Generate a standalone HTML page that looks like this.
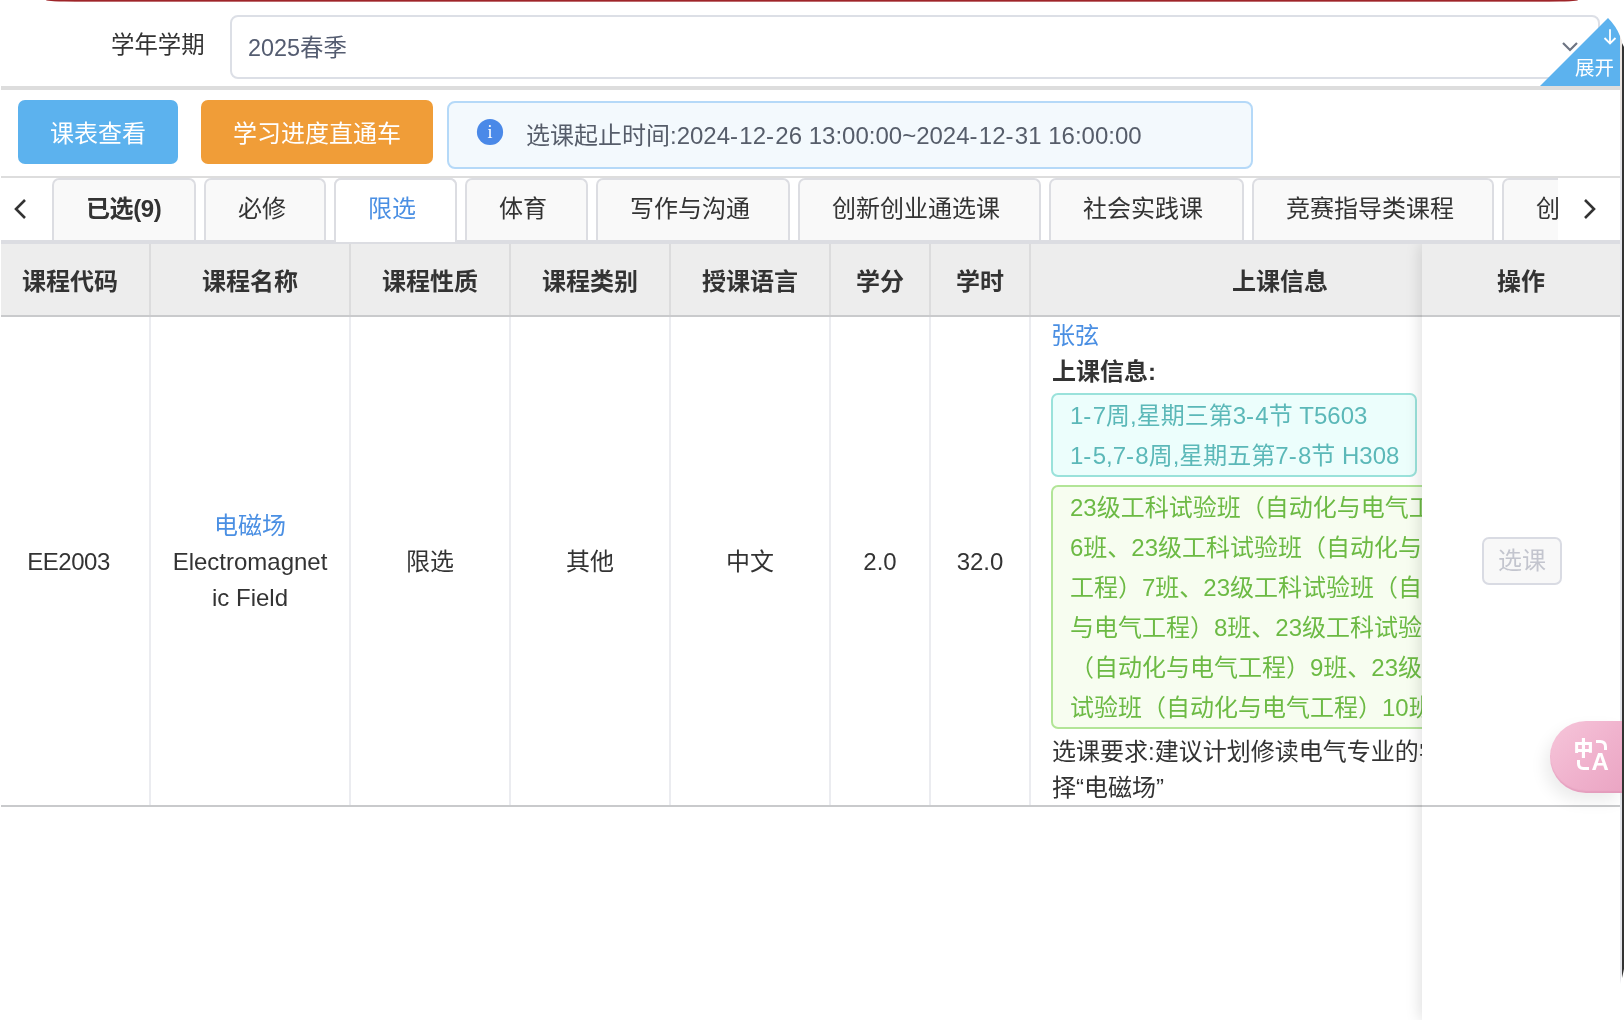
<!DOCTYPE html>
<html lang="zh-CN">
<head>
<meta charset="utf-8">
<title>选课</title>
<style>
*{box-sizing:border-box;margin:0;padding:0}
html,body{width:1624px;height:1020px;overflow:hidden;background:#fff}
body{position:relative;-webkit-font-smoothing:antialiased;font-family:"Liberation Sans","Noto Sans CJK SC",sans-serif;font-size:24px;color:#333;font-weight:400}
.abs{position:absolute}
#wrap{position:absolute;left:0;top:0;width:1624px;height:1020px;overflow:hidden;will-change:transform;transform:translateZ(0)}
/* top strip */
#redline{left:46px;top:0;width:1532px;height:2px;background:linear-gradient(#9c2226 0,#a0282c 50%,#dcaeb0 100%);border-radius:0 0 30px 30px/0 0 2px 2px}
#lbl{left:111px;top:27px;width:96px;height:36px;line-height:36px;font-size:23.4px;color:#333;white-space:nowrap}
#sel{left:230px;top:15px;width:1370px;height:64px;border:2px solid #dcdfe6;border-radius:8px;background:#fff}
#sel span{position:absolute;left:16px;top:13px;line-height:36px;font-size:23.4px;color:#545c70;white-space:nowrap}
#hr1{left:1px;top:86px;width:1619px;height:4px;background:#dddddd}
/* buttons */
.btn{top:100px;height:64px;border-radius:7px;color:#fff;font-size:24px;line-height:67px;text-align:center;white-space:nowrap;letter-spacing:0}
#b1{left:18px;width:160px;background:#5cb2ee}
#b2{left:201px;width:232px;background:#f09d38}
#alert{left:447px;top:101px;width:806px;height:68px;border:2px solid #b5d9f8;border-radius:8px;background:#f3f9fd}
#alert span{position:absolute;left:77px;top:15px;line-height:36px;font-size:24px;color:#565d6a;white-space:nowrap}
/* tabs */
#hr2{left:1px;top:176px;width:1619px;height:2px;background:#dddddd}
#hr3{left:1px;top:240px;width:1619px;height:4px;background:#dcdde2}
.tab{top:178px;height:62px;border:2px solid #dcdde2;border-bottom:none;border-radius:7px 7px 0 0;background:#f9f9f9;font-size:24px;line-height:58px;text-align:left;padding-left:32px;color:#333;white-space:nowrap;overflow:hidden}
.tab.act{background:#fff;color:#4a8fe3;height:64px}
.tab.b{font-weight:700;letter-spacing:-0.4px}
#tabmask{left:1558px;top:178px;width:62px;height:62px;background:#fff}
/* table */
#thead{left:1px;top:244px;width:1619px;height:71px;background:#ededed}
#theadb{left:1px;top:315px;width:1619px;height:2px;background:#c9cacc}
#rowb{left:1px;top:805px;width:1619px;height:2px;background:#c9cacc}
.vl{top:244px;width:2px;height:561px;background:#ebecf0}
.vlh{top:244px;width:2px;height:71px;background:#dcdcdd}
.th{top:244px;height:71px;line-height:76px;text-align:center;font-weight:700;font-size:24px;color:#333;white-space:nowrap}
.td{text-align:center;font-size:24px;line-height:36px;color:#333;white-space:nowrap}
.link{color:#4a8fe3}
#info{left:1051px;top:318px;width:380px;height:490px;font-size:24px;line-height:36px;color:#333;white-space:nowrap}
i{font-style:normal;letter-spacing:1.3px}
#teal{left:0;top:75px;width:366px;height:84px;border:2px solid #9ae2db;border-radius:7px;background:#ecfefc;color:#5bb8b8;padding:1px 0 0 17px;line-height:40px}
#green{left:0;top:167px;width:430px;height:244px;border:2px solid #b2e597;border-radius:7px;background:#f7fdf0;color:#6cba44;padding:1px 0 0 17px;line-height:40px}
#req{left:1px;top:416px;line-height:36px}
/* fixed col */
#fix{left:1422px;top:244px;width:198px;height:776px;background:#fff;box-shadow:-2px 0 14px rgba(0,0,0,.13);clip-path:inset(0 0 0 -40px)}
#fixh{left:0;top:0;width:198px;height:71px;background:#ededed;line-height:76px;text-align:center;font-weight:700}
#fixhb{left:0;top:71px;width:198px;height:2px;background:#c9cacc}
#fixrb{left:0;top:561px;width:198px;height:2px;background:#c9cacc}
#xk{left:60px;top:293px;width:80px;height:48px;border:2px solid #d9dbe3;border-radius:7px;background:#f8f8f8;color:#c3c5ce;font-size:24px;line-height:44px;text-align:center}
/* right edge */
#edge1{left:1620px;top:36px;width:2px;height:948px;background:linear-gradient(#ebe5e1 0,#ebe5e1 50px,#e4e5ea 140px,#e4e5ea 100%);clip-path:polygon(0 0,100% 5px,100% 936px,0 100%)}
#edge2{left:1622px;top:38px;width:2px;height:940px;background:#333;clip-path:polygon(0 5px,100% 9px,100% 931px,0 100%);z-index:6}
#pill{left:1550px;top:721px;width:72px;height:72px;border-radius:36px 0 0 36px;background:linear-gradient(135deg,#f6c6da 0%,#f0b2cd 55%,#eaa5c3 100%);box-shadow:-5px 8px 16px rgba(0,0,0,.08),inset 0 -2px 1px rgba(205,120,160,.25);z-index:5}
</style>
</head>
<body>
<div id="wrap">
<div class="abs" id="redline"></div>
<div class="abs" id="lbl">学年学期</div>
<div class="abs" id="sel"><span>2025春季</span>
<svg class="abs" style="left:1329px;top:24px" width="18" height="12" viewBox="0 0 18 12"><path d="M2 2 L9 9 L16 2" fill="none" stroke="#6d7483" stroke-width="2.2"/></svg>
</div>
<div class="abs" id="hr1"></div>
<svg class="abs" style="left:1536px;top:14px" width="88" height="76" viewBox="0 0 88 76"><path d="M4 72 L72 4 Q80 12 84 22 L84 72 Z" fill="#5cb2ee"/>
<path d="M74 15.300 V29.500 M68.500 24 L74 29.500 L79.500 24" fill="none" stroke="#fff" stroke-width="1.8"/>
<text x="39" y="61" font-size="19.500" fill="#fff" font-family="Liberation Sans,Noto Sans CJK SC,sans-serif">展开</text></svg>

<div class="abs btn" id="b1">课表查看</div>
<div class="abs btn" id="b2">学习进度直通车</div>
<div class="abs" id="alert">
<svg class="abs" style="left:26.500px;top:15px" width="28" height="28" viewBox="0 0 28 28"><circle cx="14" cy="14" r="13.100" fill="#4a89e8"/><text x="14" y="20" text-anchor="middle" font-size="18" font-family="Liberation Serif,serif" fill="#fff">i</text></svg>
<span>选课起止时间:2024<i>-</i>12<i>-</i>26 13:00:00~2024<i>-</i>12<i>-</i>31 16:00:00</span></div>

<div class="abs" id="hr2"></div>
<div class="abs tab b" style="left:52px;width:144px">已选(9)</div>
<div class="abs tab " style="left:204px;width:122px">必修</div>
<div class="abs tab act" style="left:334px;width:123px">限选</div>
<div class="abs tab " style="left:465px;width:123px">体育</div>
<div class="abs tab " style="left:596px;width:194px">写作与沟通</div>
<div class="abs tab " style="left:798px;width:243px">创新创业通选课</div>
<div class="abs tab " style="left:1049px;width:195px">社会实践课</div>
<div class="abs tab " style="left:1252px;width:242px">竞赛指导类课程</div>
<div class="abs tab " style="left:1502px;width:242px">创新实践课程</div>
<div class="abs" id="tabmask"></div>
<div class="abs" id="hr3"></div>
<div class="abs tab act" style="left:334px;width:123px;z-index:3">限选</div>
<svg class="abs" style="left:10px;top:196px" width="20" height="26" viewBox="0 0 20 26"><path d="M15 4 L6 13 L15 22" fill="none" stroke="#333" stroke-width="2.6"/></svg>
<svg class="abs" style="left:1580px;top:196px" width="20" height="26" viewBox="0 0 20 26"><path d="M5 4 L14 13 L5 22" fill="none" stroke="#333" stroke-width="2.6"/></svg>

<!-- table -->
<div class="abs" id="thead"></div>
<div class="abs th" style="left:-10px;width:160px">课程代码</div>
<div class="abs th" style="left:150px;width:200px">课程名称</div>
<div class="abs th" style="left:350px;width:160px">课程性质</div>
<div class="abs th" style="left:510px;width:160px">课程类别</div>
<div class="abs th" style="left:670px;width:160px">授课语言</div>
<div class="abs th" style="left:830px;width:100px">学分</div>
<div class="abs th" style="left:930px;width:100px">学时</div>
<div class="abs th" style="left:1030px;width:500px">上课信息</div>
<div class="abs vl" style="left:149px"></div><div class="abs vl" style="left:349px"></div><div class="abs vl" style="left:509px"></div><div class="abs vl" style="left:669px"></div><div class="abs vl" style="left:829px"></div><div class="abs vl" style="left:929px"></div><div class="abs vl" style="left:1029px"></div>
<div class="abs vlh" style="left:149px"></div><div class="abs vlh" style="left:349px"></div><div class="abs vlh" style="left:509px"></div><div class="abs vlh" style="left:669px"></div><div class="abs vlh" style="left:829px"></div><div class="abs vlh" style="left:929px"></div><div class="abs vlh" style="left:1029px"></div>
<div class="abs" id="theadb"></div>

<div class="abs td" style="left:-11.500px;top:544px;width:160px;letter-spacing:-0.45px">EE2003</div>
<div class="abs td" style="left:150px;top:508px;width:200px"><span class="link">电磁场</span><br>Electromagnet<br>ic Field</div>
<div class="abs td" style="left:350px;top:544px;width:160px">限选</div>
<div class="abs td" style="left:510px;top:544px;width:160px">其他</div>
<div class="abs td" style="left:670px;top:544px;width:160px">中文</div>
<div class="abs td" style="left:830px;top:544px;width:100px">2.0</div>
<div class="abs td" style="left:930px;top:544px;width:100px">32.0</div>

<div class="abs" id="info">
<div class="abs link" style="left:0;top:0">张弦</div>
<div class="abs" style="left:1px;top:36px;font-weight:700">上课信息:</div>
<div class="abs" id="teal">1<i>-</i>7周,星期三第3<i>-</i>4节 T5603<br>1<i>-</i>5,7<i>-</i>8周,星期五第7<i>-</i>8节 H308</div>
<div class="abs" id="green">23级工科试验班（自动化与电气工程）<br>6班、23级工科试验班（自动化与电气<br>工程）7班、23级工科试验班（自动化<br>与电气工程）8班、23级工科试验班<br>（自动化与电气工程）9班、23级工科<br>试验班（自动化与电气工程）10班</div>
<div class="abs" id="req">选课要求:建议计划修读电气专业的学生选<br>择“电磁场”</div>
</div>
<div class="abs" id="rowb"></div>

<div class="abs" id="fix">
<div class="abs" id="fixh">操作</div>
<div class="abs" id="fixhb"></div>
<div class="abs" id="xk">选课</div>
<div class="abs" id="fixrb"></div>
</div>

<div class="abs" id="pill">
<svg class="abs" style="left:22px;top:15px" width="42" height="42" viewBox="0 0 42 42"><text x="1.500" y="20" font-size="20" font-weight="900" fill="#fff" font-family="Liberation Sans,Noto Sans CJK SC,sans-serif">中</text><text x="19.500" y="33.700" font-size="24" font-weight="700" fill="#fff" font-family="Liberation Sans,sans-serif">A</text><path d="M24 5.500 H28 Q33.500 5.500 33.500 11 V14" fill="none" stroke="#fff" stroke-width="3"/><path d="M6.500 24 V27.500 Q6.500 32.500 11.500 32.500 H17" fill="none" stroke="#fff" stroke-width="3"/></svg>
</div>
<div class="abs" id="edge1"></div>
<div class="abs" id="edge2"></div>
</div>
</body>
</html>
